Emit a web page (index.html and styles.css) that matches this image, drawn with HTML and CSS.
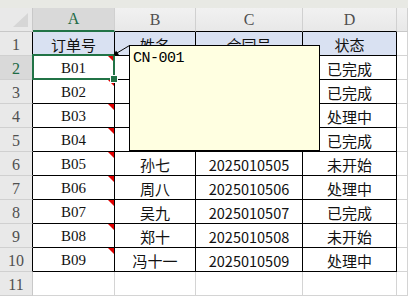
FILE: index.html
```html
<!DOCTYPE html>
<html lang="zh">
<head>
<meta charset="utf-8">
<link rel="stylesheet" href="styles.css">
</head>
<body>
<div class="sheet">
  <div class="strip"></div>
  <div class="grid">
    <div class="corner"><span class="corner-tri"></span></div>
    <div class="ch ch-sel">A</div>
    <div class="ch ch-t">B</div>
    <div class="ch ch-t">C</div>
    <div class="ch ch-t">D</div>
    <div class="ch"></div>

    <div class="rh rh-t">1</div>
    <div class="c t hd">订单号</div>
    <div class="c t hd">姓名</div>
    <div class="c t hd">合同号</div>
    <div class="c t hd">状态</div>
    <div class="c"></div>

    <div class="rh rh-t rh-sel">2</div>
    <div class="c t code note">B01</div>
    <div class="c t"></div>
    <div class="c t"></div>
    <div class="c t">已完成</div>
    <div class="c"></div>

    <div class="rh rh-t">3</div>
    <div class="c t code note">B02</div>
    <div class="c t"></div>
    <div class="c t"></div>
    <div class="c t">已完成</div>
    <div class="c"></div>

    <div class="rh rh-t">4</div>
    <div class="c t code note">B03</div>
    <div class="c t"></div>
    <div class="c t"></div>
    <div class="c t">处理中</div>
    <div class="c"></div>

    <div class="rh rh-t">5</div>
    <div class="c t code note">B04</div>
    <div class="c t"></div>
    <div class="c t"></div>
    <div class="c t">已完成</div>
    <div class="c"></div>

    <div class="rh rh-t">6</div>
    <div class="c t code note">B05</div>
    <div class="c t">孙七</div>
    <div class="c t num">2025010505</div>
    <div class="c t">未开始</div>
    <div class="c"></div>

    <div class="rh rh-t">7</div>
    <div class="c t code note">B06</div>
    <div class="c t">周八</div>
    <div class="c t num">2025010506</div>
    <div class="c t">处理中</div>
    <div class="c"></div>

    <div class="rh rh-t">8</div>
    <div class="c t code note">B07</div>
    <div class="c t">吴九</div>
    <div class="c t num">2025010507</div>
    <div class="c t">已完成</div>
    <div class="c"></div>

    <div class="rh rh-t">9</div>
    <div class="c t code note">B08</div>
    <div class="c t">郑十</div>
    <div class="c t num">2025010508</div>
    <div class="c t">未开始</div>
    <div class="c"></div>

    <div class="rh rh-t">10</div>
    <div class="c t code note">B09</div>
    <div class="c t">冯十一</div>
    <div class="c t num">2025010509</div>
    <div class="c t">处理中</div>
    <div class="c"></div>

    <div class="rh">11</div>
    <div class="c"></div>
    <div class="c"></div>
    <div class="c"></div>
    <div class="c"></div>
    <div class="c"></div>
  </div>

  <div class="selection"><span class="handle"></span></div>

  <svg class="leader" width="408" height="296" viewBox="0 0 408 296">
    <line x1="129.5" y1="45.5" x2="117" y2="53" stroke="#000" stroke-width="1"/>
    <polygon points="113.5,55.5 116,50.5 119,55" fill="#000"/>
  </svg>

  <div class="comment">CN-001</div>
</div>
</body>
</html>
```

FILE: styles.css
```css
* { box-sizing: border-box; }
html, body { margin: 0; padding: 0; background: #fff; }
.sheet {
  position: relative;
  width: 408px;
  height: 296px;
  overflow: hidden;
  font-family: "Noto Sans CJK SC", sans-serif;
}
.strip {
  height: 8px;
  background: #e8e9e4;
}
.grid {
  display: grid;
  grid-template-columns: 33px 82px 81px 107px 94px 1fr;
  grid-template-rows: repeat(12, 24px);
}
.corner {
  position: relative;
  background: #e9e9e9;
  border-right: 1px solid #c8c8c8;
  border-bottom: 1px solid #c8c8c8;
}
.corner-tri {
  position: absolute;
  right: 4px;
  bottom: 4px;
  width: 0;
  height: 0;
  border-left: 15px solid transparent;
  border-bottom: 14px solid #d6d6d6;
}
.ch {
  background: linear-gradient(#f1f1f1, #e8e8e8);
  border-right: 1px solid #d0d0d0;
  border-bottom: 1px solid #c8c8c8;
  display: flex;
  align-items: center;
  justify-content: center;
  font-family: "Liberation Serif", serif;
  font-size: 16px;
  color: #505050;
}
.ch-t { border-bottom-color: #000; }
.ch-sel {
  background: #d9d9d9;
  color: #1e6b45;
  border-bottom: 2px solid #217346;
}
.rh {
  background: #e9e9e9;
  border-right: 1px solid #c8c8c8;
  border-bottom: 1px solid #d0d0d0;
  display: flex;
  align-items: center;
  justify-content: center;
  padding-top: 2px;
  font-family: "Liberation Serif", serif;
  font-size: 16px;
  color: #505050;
}
.rh-t { border-right-color: #000; }
.rh-sel { background: #d9d9d9; color: #1e6b45; }
.c {
  position: relative;
  border-right: 1px solid #d4d4d4;
  border-bottom: 1px solid #d4d4d4;
  display: flex;
  align-items: center;
  justify-content: center;
  padding-top: 2px;
  font-size: 15px;
  color: #111;
  white-space: nowrap;
}
.t {
  border-right-color: #000;
  border-bottom-color: #000;
}
.hd { background: #d9e1f2; }
.code {
  font-family: "Liberation Serif", "Noto Sans CJK SC", serif;
  font-size: 15px;
}
.num {
  font-size: 14.5px;
}
.note::after {
  content: "";
  position: absolute;
  top: 0;
  right: 0;
  width: 0;
  height: 0;
  border-top: 6px solid #e00000;
  border-left: 6px solid transparent;
}
.selection {
  position: absolute;
  left: 32px;
  top: 54px;
  width: 83px;
  height: 26px;
  border: 2px solid #217346;
}
.handle {
  position: absolute;
  right: -4px;
  bottom: -4px;
  width: 6px;
  height: 6px;
  background: #217346;
  outline: 1px solid #fff;
}
.leader {
  position: absolute;
  left: 0;
  top: 0;
}
.comment {
  position: absolute;
  left: 129px;
  top: 45px;
  width: 191px;
  height: 106px;
  background: #ffffe1;
  border: 1px solid #000;
  padding: 4px 0 0 3px;
  font-family: "Liberation Mono", monospace;
  font-size: 15px;
  letter-spacing: -0.5px;
  line-height: 18px;
  color: #000;
}
```
